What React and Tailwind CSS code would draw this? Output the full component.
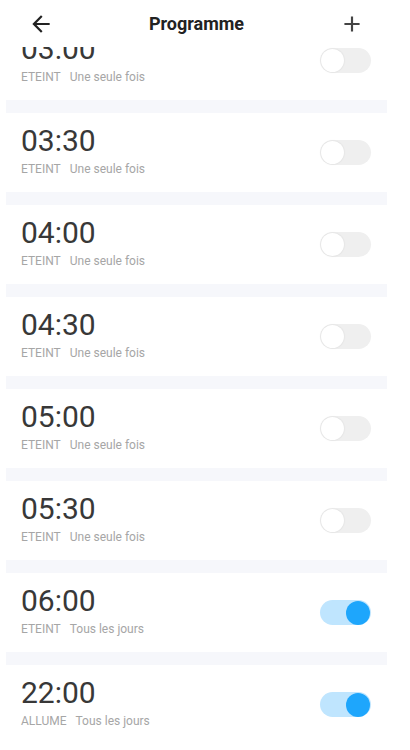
import React from "react";

const rows = [
  { t: "03:00", s: "ETEINT", r: "Une seule fois", on: false },
  { t: "03:30", s: "ETEINT", r: "Une seule fois", on: false },
  { t: "04:00", s: "ETEINT", r: "Une seule fois", on: false },
  { t: "04:30", s: "ETEINT", r: "Une seule fois", on: false },
  { t: "05:00", s: "ETEINT", r: "Une seule fois", on: false },
  { t: "05:30", s: "ETEINT", r: "Une seule fois", on: false },
  { t: "06:00", s: "ETEINT", r: "Tous les jours", on: true },
  { t: "22:00", s: "ALLUME", r: "Tous les jours", on: true },
];

function Toggle({ on }) {
  return on ? (
    <div className="flex h-[25px] w-[51px] items-center justify-end rounded-full bg-[#bfe5fe] p-px">
      <div className="h-[24px] w-[24px] rounded-full bg-[#1ea6fc]" />
    </div>
  ) : (
    <div className="flex h-[25px] w-[51px] items-center justify-start rounded-full bg-[#efefef] p-px">
      <div className="h-[23px] w-[23px] rounded-full bg-white shadow-[0_0_2px_rgba(0,0,0,0.12)]" />
    </div>
  );
}

export default function App() {
  return (
    <div className="h-[750px] w-[410px] overflow-hidden bg-white" style={{ fontFamily: "Roboto, 'Noto Sans', sans-serif" }}>
      <div className="w-[393px]">
        <div className="flex h-[47px] items-center justify-between bg-white px-[28px]">
          <svg width="26" height="26" viewBox="0 0 24 24" fill="#222">
            <path d="M20 11H7.83l5.59-5.59L12 4l-8 8 8 8 1.41-1.41L7.83 13H20v-2z" />
          </svg>
          <div className="text-[18px] font-bold leading-none text-[#222]">Programme</div>
          <svg width="26" height="26" viewBox="0 0 24 24" fill="#444">
            <path d="M19 13h-6v6h-2v-6H5v-2h6V5h2v6h6v2z" />
          </svg>
        </div>
        <div className="h-[703px] overflow-hidden">
          <div className="-mt-[26px] flex flex-col">
            {rows.map((row, i) => (
              <React.Fragment key={row.t}>
                {i > 0 && <div className="mx-[6px] h-[13px] bg-[#f6f7fb]" />}
                <div className="flex h-[79px] items-center justify-between pl-[21px] pr-[22px]">
                  <div className="flex flex-col pt-[13px] pb-[17px]">
                    <div className="text-[30px] leading-none text-[#383838]">{row.t}</div>
                    <div className="mt-[7px] flex text-[12px] leading-none text-[#a6a6a6]">
                      <span>{row.s}</span>
                      <span className="ml-[9px]">{row.r}</span>
                    </div>
                  </div>
                  <Toggle on={row.on} />
                </div>
              </React.Fragment>
            ))}
          </div>
        </div>
      </div>
    </div>
  );
}
